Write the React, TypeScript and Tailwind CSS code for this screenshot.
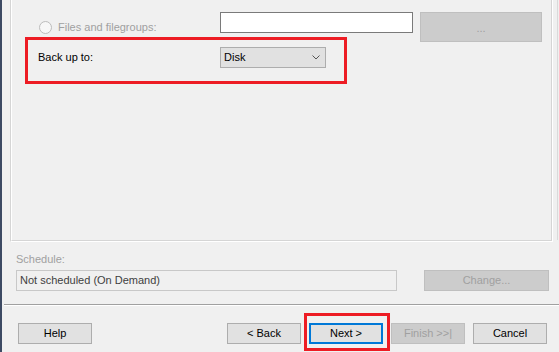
import React from 'react';

const font = { fontFamily: '"Liberation Sans", Arial, sans-serif' };

const Btn = ({ label, disabled, className = '' }: { label: string; disabled?: boolean; className?: string }) => (
  <div
    className={`w-[74px] h-[21px] flex items-center justify-center border text-[11px] ${
      disabled ? 'bg-[#cccccc] border-[#bfbfbf] text-[#a0a0a0]' : 'bg-[#e1e1e1] border-[#adadad] text-black'
    } ${className}`}
  >
    {label}
  </div>
);

export default function App() {
  return (
    <div className="w-[559px] h-[352px] bg-[#f0f0f0] flex overflow-hidden" style={font}>
      {/* window edge */}
      <div className="w-[2px] h-full bg-[#3d4a63]" />

      <div className="flex-1 flex flex-col">
        {/* options group box, top cut off */}
        <div className="flex">
          <div className="ml-[8px] w-[543px] h-[242px] border-l border-[#d5d5d5] border-r border-b border-r-white border-b-white">
            <div className="h-full border-l border-white border-r border-b border-r-[#d5d5d5] border-b-[#d5d5d5] pt-[12px]">
              <div className="flex items-start h-[25px]">
                <div className="w-[208px] pl-[27px] pt-[9px] flex items-center gap-[6px]">
                  <span className="w-[13px] h-[13px] rounded-full border border-[#bcbcbc] bg-[#f7f7f7]" />
                  <span className="text-[11px] leading-[13px] text-[#a0a0a0]">Files and filegroups:</span>
                </div>
                <div className="w-[193px] h-[21px] border border-[#7a7a7a] bg-white" />
                <div className="ml-[7px] w-[122px] h-[30px] bg-[#cccccc] border border-[#bfbfbf] flex items-center justify-center pt-[3px] text-[11px] text-[#a0a0a0]">
                  ...
                </div>
              </div>

              {/* annotated "Back up to" row */}
              <div className="ml-[13px] w-[322px] h-[47px] border-[3px] border-[#ed1c24] flex items-start pt-[7px]">
                <div className="w-[192px] pl-[10px] h-[21px] flex items-center text-[11px] text-black">Back up to:</div>
                <div className="w-[106px] h-[21px] bg-[#e1e1e1] border border-[#adadad] flex items-center justify-between pl-[3px] pr-[5px] text-[11px] text-black">
                  <span>Disk</span>
                  <svg width="8" height="5" viewBox="0 0 8 5" fill="none">
                    <path d="M0.5 0.5L4 4L7.5 0.5" stroke="#555" strokeWidth="1" />
                  </svg>
                </div>
              </div>
            </div>
          </div>
          <div className="w-[4px]" />
          <div className="w-[1px] h-[240px] bg-[#dadada]" />
        </div>

        {/* schedule */}
        <div className="h-[28px] pt-[10px] pl-[14px] text-[11px] leading-[14px] text-[#a0a0a0]">Schedule:</div>
        <div className="flex items-start h-[21px]">
          <div className="ml-[14px] w-[381px] h-[21px] border border-[#c8c8c8] flex items-center pl-[3px] text-[11px] text-[#404040]">
            Not scheduled (On Demand)
          </div>
          <div className="ml-[27px] w-[125px] h-[21px] bg-[#cccccc] border border-[#bfbfbf] flex items-center justify-center text-[11px] text-[#a0a0a0]">
            Change...
          </div>
        </div>

        {/* separator */}
        <div className="mt-[13px] ml-[2px] border-t border-[#a0a0a0] border-b border-b-white" />

        {/* wizard buttons */}
        <div className="mt-[17px] flex items-start">
          <Btn label="Help" className="ml-[16px]" />
          <Btn label="< Back" className="ml-[135px]" />
          <div className="ml-[3px] -mt-[10px] -mb-[7px] border-[3px] border-[#ed1c24] pt-[7px] pb-[4px] pl-[2px] pr-[4px]">
            <div className="w-[74px] h-[21px] flex items-center justify-center border-2 border-[#0078d7] bg-[#e1e1e1] text-[11px] text-black">
              Next &gt;
            </div>
          </div>
          <Btn label="Finish >>|" disabled className="ml-[1px]" />
          <Btn label="Cancel" className="ml-[8px]" />
        </div>
      </div>
    </div>
  );
}
